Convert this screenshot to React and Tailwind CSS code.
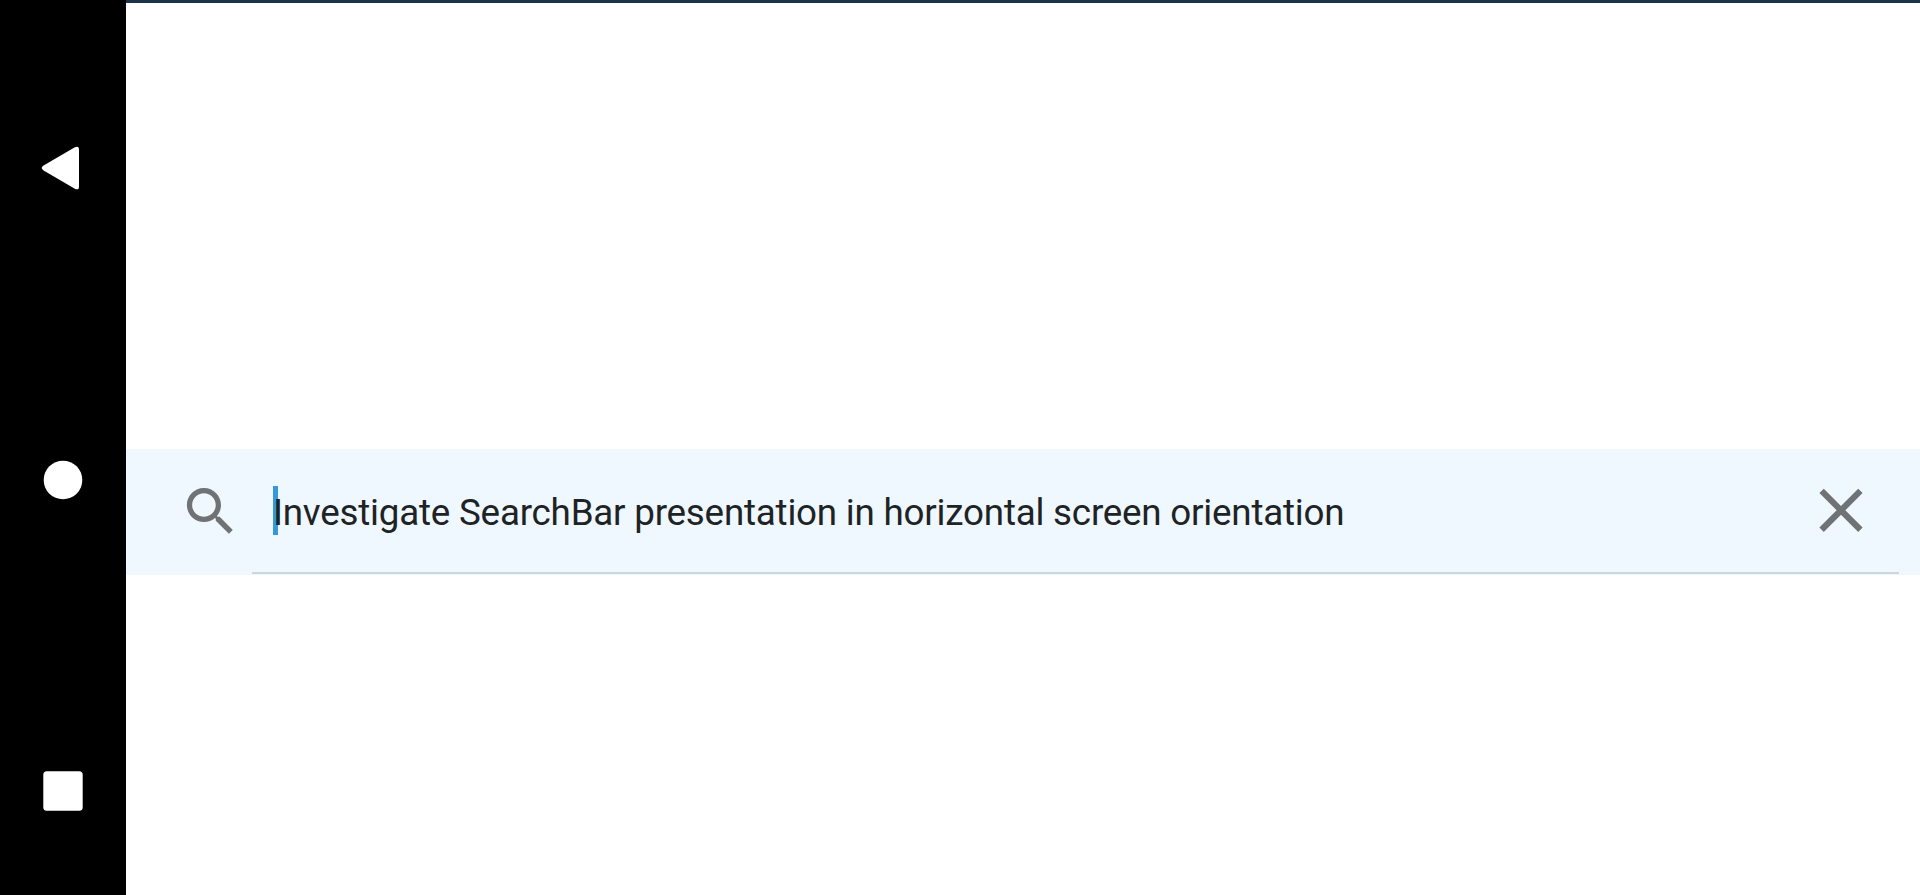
function NavigationRail() {
  return (
    <nav className="flex h-full w-[126px] shrink-0 flex-col items-center bg-black">
      <button aria-label="Back" className="mt-[136px] h-[64px] w-[126px]">
        <svg width="126" height="64" viewBox="0 0 126 64" className="block">
          <path d="M43.6 29.6 L74.4 11.6 Q79 9 79 13.6 V50.4 Q79 55 74.4 52.4 L43.6 34.4 Q39.8 32 43.6 29.6 Z" fill="#fff" />
        </svg>
      </button>
      <button aria-label="Home" className="mt-[248px] h-[64px] w-[126px]">
        <svg width="126" height="64" viewBox="0 0 126 64" className="block">
          <circle cx="63" cy="32" r="19.3" fill="#fff" />
        </svg>
      </button>
      <button aria-label="Overview" className="mt-[247px] h-[64px] w-[126px]">
        <svg width="126" height="64" viewBox="0 0 126 64" className="block">
          <rect x="43.3" y="12.3" width="39.4" height="39.4" rx="3.5" fill="#fff" />
        </svg>
      </button>
    </nav>
  );
}

function SearchBar() {
  return (
    <div className="flex h-[126px] w-full bg-[#eff7ff]">
      <div className="w-[126px] shrink-0 pl-[53px] pt-[31px]">
        <svg width="63" height="63" viewBox="0 0 24 24" fill="#707375">
          <path d="M15.5 14h-.79l-.28-.27C15.41 12.59 16 11.11 16 9.5 16 5.91 13.09 3 9.5 3S3 5.91 3 9.5 5.91 16 9.5 16c1.61 0 3.09-.59 4.23-1.57l.27.28v.79l5 4.99L20.49 19l-4.99-5zm-6 0C7.01 14 5 11.99 5 9.5S7.01 5 9.5 5 14 7.01 14 9.5 11.99 14 9.5 14z" />
        </svg>
      </div>
      <div className="mb-px flex w-[1647px] shrink-0 border-b-2 border-[#ccd6df] pl-[21px]">
        <div className="relative grow pt-[39px]">
          <span className="absolute left-0 top-[37px] h-[49px] w-[5px] bg-[#3498db]" />
          <span className="relative block whitespace-nowrap font-[Roboto,sans-serif] text-[36.75px] leading-[50px] tracking-[-0.21px] text-[#202325]">
            Investigate SearchBar presentation in horizontal screen orientation
          </span>
        </div>
        <button aria-label="Clear" className="mr-[21px] mt-[24px] h-[74px] w-[74px]">
          <svg width="74" height="74" viewBox="0 -0.1 24 24" fill="#707375" className="block">
            <path d="M19 6.41L17.59 5 12 10.59 6.41 5 5 6.41 10.59 12 5 17.59 6.41 19 12 13.41 17.59 19 19 17.59 13.41 12z" />
          </svg>
        </button>
      </div>
    </div>
  );
}

export default function App() {
  return (
    <div className="flex h-[895px] w-full overflow-hidden bg-white">
      <NavigationRail />
      <main className="flex grow flex-col border-t-[3px] border-[#1b344c] pt-[446px]">
        <SearchBar />
      </main>
    </div>
  );
}
